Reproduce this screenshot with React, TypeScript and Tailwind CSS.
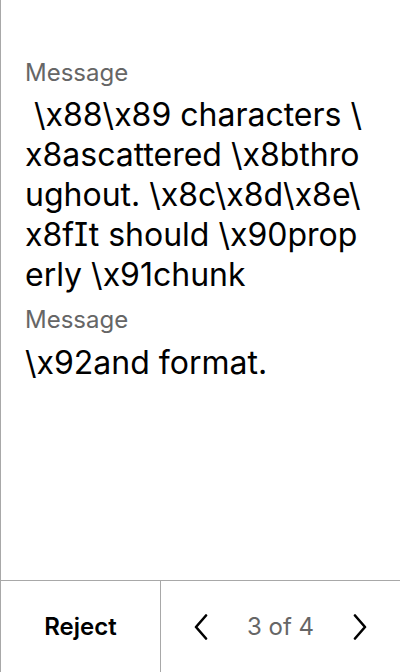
const font = { fontFamily: 'Inter, "Noto Sans", sans-serif' }

function Chevron({ dir }: { dir: 'left' | 'right' }) {
  return (
    <svg width="14" height="26" viewBox="0 0 14 26" fill="none" stroke="#000" strokeWidth="2.6" strokeLinecap="round" strokeLinejoin="round">
      {dir === 'left' ? <path d="M12 1.5 2 13l10 11.5" /> : <path d="M2 1.5 12 13 2 24.5" />}
    </svg>
  )
}

export default function App() {
  return (
    <div className="flex h-[672px] w-[400px] flex-col border-l border-[#a8a8a8] bg-white text-black [font-feature-settings:'cv08']" style={font}>
      {/* Messages */}
      <main className="flex flex-1 flex-col pl-6 pr-[27px] pt-[57px]">
        <p className="text-[24px] leading-[32px] text-[#666]">Message</p>
        <p className="mt-[6px] whitespace-pre-wrap text-[32px] leading-[40px] [line-break:anywhere]">
          {' \\x88\\x89 characters \\x8ascattered \\x8bthroughout. \\x8c\\x8d\\x8e\\x8fIt should \\x90properly \\x91chunk'}
        </p>
        <p className="mt-[9px] text-[24px] leading-[32px] text-[#666]">Message</p>
        <p className="mt-[7px] text-[32px] leading-[40px]">\x92and format.</p>
      </main>

      {/* Footer actions */}
      <footer className="flex h-[92px] border-t border-[#a8a8a8]">
        <button className="flex w-[160px] items-center justify-center border-r border-[#a8a8a8] text-[24px] font-semibold">
          Reject
        </button>
        <div className="flex flex-1 items-center justify-between px-[33px]">
          <Chevron dir="left" />
          <span className="text-[24px] text-[#666]">3 of 4</span>
          <Chevron dir="right" />
        </div>
      </footer>
    </div>
  )
}
